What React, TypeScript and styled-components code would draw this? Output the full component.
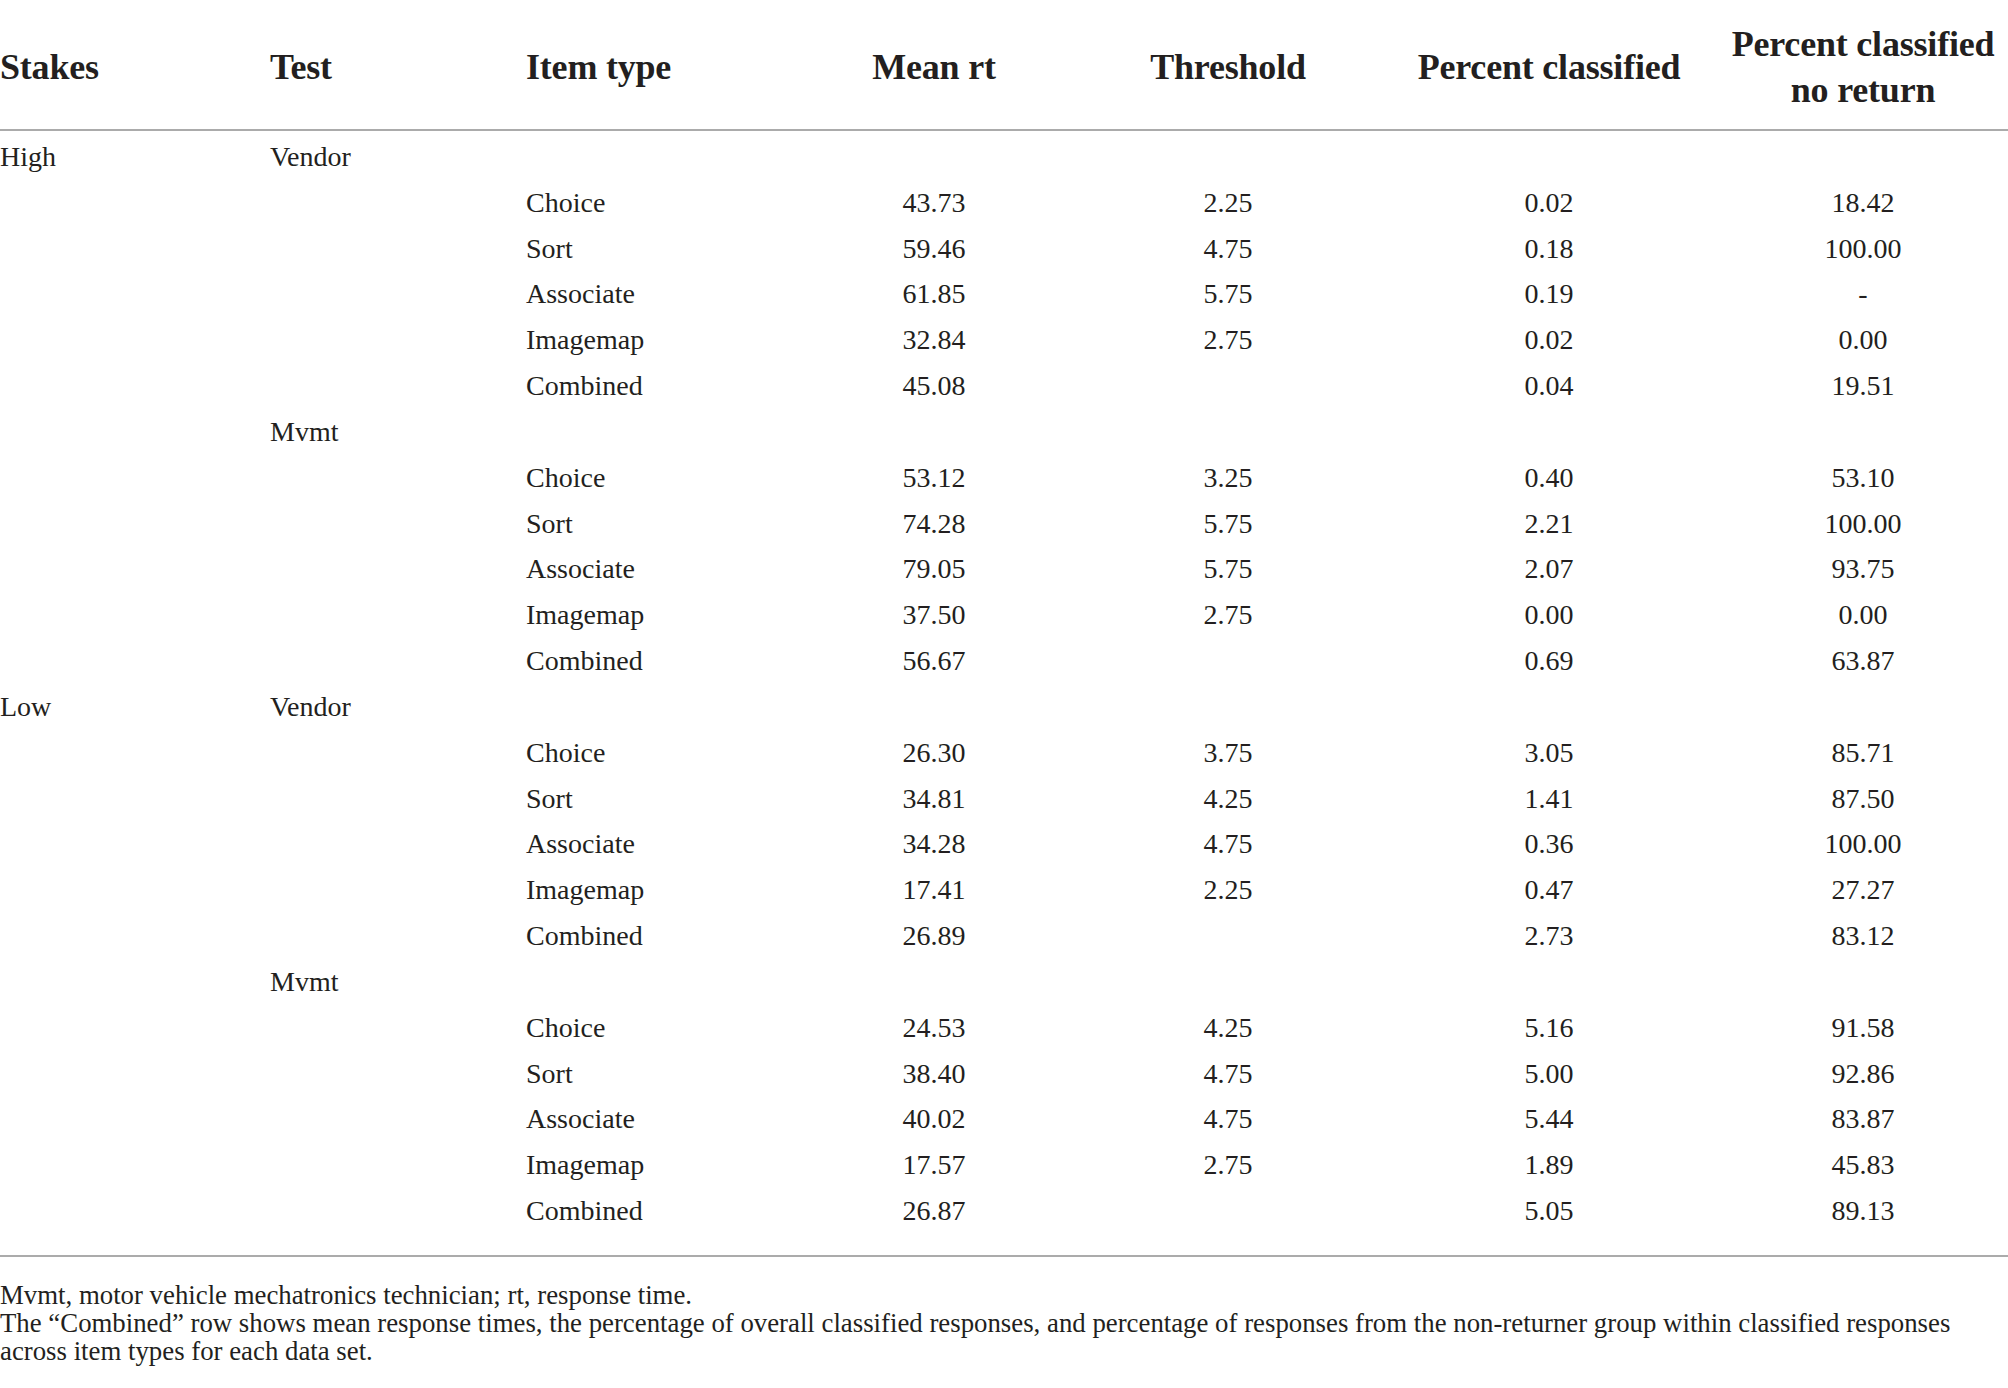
import React from "react";
import styled, { createGlobalStyle } from "styled-components";

const GlobalStyle = createGlobalStyle`
  html, body {
    margin: 0;
    padding: 0;
    background: #ffffff;
  }
  body {
    font-family: "Liberation Serif", "Times New Roman", serif;
    color: #231f20;
  }
`;

const COLS = "270px 256px 266px 284px 304px 338px 290px";

const Page = styled.div`
  width: 2008px;
  min-height: 1388px;
  background: #ffffff;
`;

const Table = styled.div`
  display: flex;
  flex-direction: column;
`;

const HeaderRow = styled.div`
  display: grid;
  grid-template-columns: ${COLS};
  height: 131px;
  box-sizing: border-box;
  padding-top: 4px;
  align-items: center;
  border-bottom: 2px solid #ababab;
`;

const HeadCell = styled.div<{ $align?: "left" | "center" }>`
  font-size: 36px;
  line-height: 46px;
  font-weight: 700;
  letter-spacing: -0.2px;
  text-align: ${(p) => p.$align ?? "center"};
  white-space: nowrap;
`;

const Body = styled.div`
  display: flex;
  flex-direction: column;
  padding-top: 3px;
  padding-bottom: 21px;
  border-bottom: 2px solid #ababab;
`;

const Row = styled.div`
  display: grid;
  grid-template-columns: ${COLS};
  height: 45.83px;
  align-items: center;
`;

const Cell = styled.div<{ $align?: "left" | "center" }>`
  font-size: 28px;
  line-height: 45.83px;
  text-align: ${(p) => p.$align ?? "center"};
  white-space: nowrap;
`;

const Notes = styled.div`
  display: flex;
  flex-direction: column;
  padding-top: 24px;
`;

const NoteLine = styled.div`
  font-size: 26.8px;
  line-height: 28.2px;
  white-space: nowrap;
`;

type Item = [string, string, string, string, string];

interface Group {
  stakes?: string;
  test: string;
  items: Item[];
}

const groups: Group[] = [
  {
    stakes: "High",
    test: "Vendor",
    items: [
      ["Choice", "43.73", "2.25", "0.02", "18.42"],
      ["Sort", "59.46", "4.75", "0.18", "100.00"],
      ["Associate", "61.85", "5.75", "0.19", "-"],
      ["Imagemap", "32.84", "2.75", "0.02", "0.00"],
      ["Combined", "45.08", "", "0.04", "19.51"],
    ],
  },
  {
    test: "Mvmt",
    items: [
      ["Choice", "53.12", "3.25", "0.40", "53.10"],
      ["Sort", "74.28", "5.75", "2.21", "100.00"],
      ["Associate", "79.05", "5.75", "2.07", "93.75"],
      ["Imagemap", "37.50", "2.75", "0.00", "0.00"],
      ["Combined", "56.67", "", "0.69", "63.87"],
    ],
  },
  {
    stakes: "Low",
    test: "Vendor",
    items: [
      ["Choice", "26.30", "3.75", "3.05", "85.71"],
      ["Sort", "34.81", "4.25", "1.41", "87.50"],
      ["Associate", "34.28", "4.75", "0.36", "100.00"],
      ["Imagemap", "17.41", "2.25", "0.47", "27.27"],
      ["Combined", "26.89", "", "2.73", "83.12"],
    ],
  },
  {
    test: "Mvmt",
    items: [
      ["Choice", "24.53", "4.25", "5.16", "91.58"],
      ["Sort", "38.40", "4.75", "5.00", "92.86"],
      ["Associate", "40.02", "4.75", "5.44", "83.87"],
      ["Imagemap", "17.57", "2.75", "1.89", "45.83"],
      ["Combined", "26.87", "", "5.05", "89.13"],
    ],
  },
];

export default function App() {
  return (
    <Page>
      <GlobalStyle />
      <Table>
        <HeaderRow>
          <HeadCell $align="left">Stakes</HeadCell>
          <HeadCell $align="left">Test</HeadCell>
          <HeadCell $align="left">Item type</HeadCell>
          <HeadCell>Mean rt</HeadCell>
          <HeadCell>Threshold</HeadCell>
          <HeadCell>Percent classified</HeadCell>
          <HeadCell>
            Percent classified
            <br />
            no return
          </HeadCell>
        </HeaderRow>
        <Body>
          {groups.map((g, gi) => (
            <React.Fragment key={gi}>
              <Row>
                <Cell $align="left">{g.stakes ?? ""}</Cell>
                <Cell $align="left">{g.test}</Cell>
                <Cell />
                <Cell />
                <Cell />
                <Cell />
                <Cell />
              </Row>
              {g.items.map((it, ii) => (
                <Row key={ii}>
                  <Cell />
                  <Cell />
                  <Cell $align="left">{it[0]}</Cell>
                  <Cell>{it[1]}</Cell>
                  <Cell>{it[2]}</Cell>
                  <Cell>{it[3]}</Cell>
                  <Cell>{it[4]}</Cell>
                </Row>
              ))}
            </React.Fragment>
          ))}
        </Body>
      </Table>
      <Notes>
        <NoteLine>Mvmt, motor vehicle mechatronics technician; rt, response time.</NoteLine>
        <NoteLine>
          The “Combined” row shows mean response times, the percentage of overall classified responses, and percentage of
          responses from the non-returner group within classified responses
        </NoteLine>
        <NoteLine>across item types for each data set.</NoteLine>
      </Notes>
    </Page>
  );
}
